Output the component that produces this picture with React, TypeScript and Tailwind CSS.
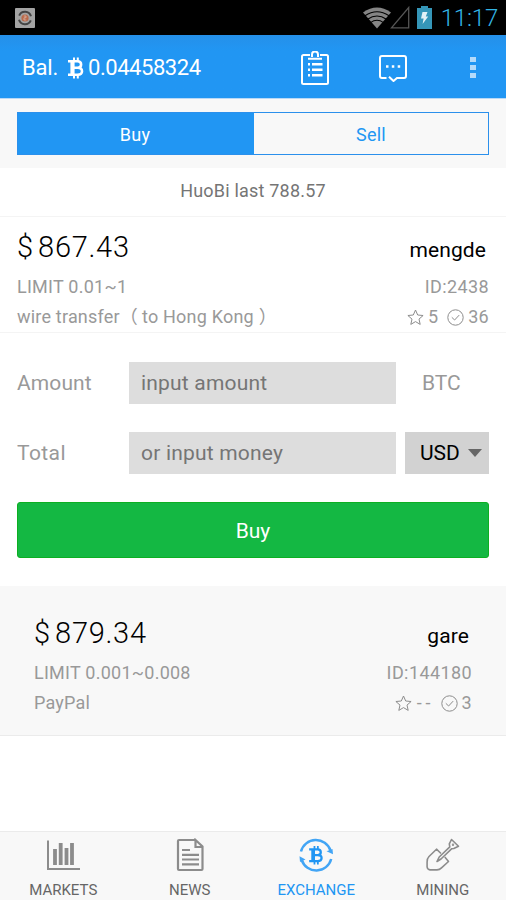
import { useState } from 'react'

const offers = [
  {
    price: '867.43',
    user: 'mengde',
    limit: '0.01~1',
    id: '2438',
    method: ['wire transfer', 'to Hong Kong'],
    stars: '5',
    trades: '36',
  },
  {
    price: '879.34',
    user: 'gare',
    limit: '0.001~0.008',
    id: '144180',
    method: ['PayPal'],
    stars: '--',
    trades: '3',
  },
]

function BitcoinMark(props: React.SVGProps<SVGSVGElement>) {
  return (
    <svg viewBox="0 0 16 22" fill="none" stroke="currentColor" {...props}>
      <path d="M6 .5v4M9.800 .5v4M6 17.500v4M9.800 17.500v4" strokeWidth="2" />
      <path d="M0 4.300h9.500q3.600 0 3.600 3.200T9.500 10.800M0 17.700h9.500q4.500 0 4.500-3.500T9.500 10.800H5" strokeWidth="2.600" />
      <path d="M4.500 4v14" strokeWidth="4.200" />
    </svg>
  )
}

function StatusBar() {
  return (
    <div className="h-[35px] bg-black flex items-center justify-between pl-[15px] pr-[8px]">
      <svg className="w-5 h-5" viewBox="0 0 20 20">
        <rect width="20" height="20" rx="1" fill="#a3a3a3" />
        <circle cx="10" cy="10" r="3.6" fill="#b9694a" />
        <path d="M8.8 8h2.2v1.8H9v2.2h2.3" fill="none" stroke="#d8b5a5" strokeWidth=".8" />
        <path d="M4.2 7.6A6.3 6.3 0 0 1 16 8.2" fill="none" stroke="#444" strokeWidth="2" />
        <path d="M15.8 12.4A6.3 6.3 0 0 1 4 11.8" fill="none" stroke="#444" strokeWidth="2" />
      </svg>
      <div className="flex items-center">
        <svg className="w-[28px] h-[22px]" viewBox="0 0 28 22" fill="none">
          <path d="M0 5.600Q14-4.500 28 5.600L14 21.500Z" fill="#858585" />
          <g stroke="#000" strokeWidth="1.1">
            <path d="M2 8.800Q14 .8 26 8.800" />
            <path d="M4.600 12.200Q14 5.800 23.400 12.200" />
            <path d="M7.500 15.600Q14 11 20.500 15.600" />
          </g>
        </svg>
        <svg className="w-[20px] h-[23px] -ml-px" viewBox="0 0 20 23">
          <path d="M1.500 21.800H18.700V1.5Z" fill="none" stroke="#555" strokeWidth="1.3" />
        </svg>
        <svg className="w-[15px] h-[23px] ml-[7px]" viewBox="0 0 15 23">
          <path d="M4 0h7v2h4v21H0V2h4Z" fill="#3596b8" />
          <path d="M5.5 6h5L8.800 10.500h2.400L5.600 18l1-5.500H4Z" fill="#e3f1f6" />
        </svg>
        <span className="ml-[9px] text-[24px] leading-none text-[#33b5e5] font-light tracking-[-0.2px]">11:17</span>
      </div>
    </div>
  )
}

function Header() {
  return (
    <header className="h-[64px] bg-linear-to-b from-[#2590e9] to-[#2196f3] to-25% border-b border-[#b9d9f7] flex items-center justify-between pl-[22px] pr-[30px] text-white">
      <div className="flex items-center text-[22px] leading-none pt-[2px]">
        <span className="w-[46px] tracking-[-0.2px]">Bal.</span>
        <BitcoinMark className="w-[16px] h-[22px]" />
        <span className="ml-[4px] tracking-[-0.45px]">0.04458324</span>
      </div>
      <div className="flex items-center pt-[2px]">
        <svg className="w-[28px] h-[34px]" viewBox="0 0 28 34" fill="none" stroke="#fff" strokeWidth="2">
          <path d="M9 4H2.5A1.5 1.5 0 0 0 1 5.5v26A1.5 1.5 0 0 0 2.5 33h23a1.5 1.5 0 0 0 1.500-1.500v-26A1.500 1.500 0 0 0 25.500 4H19" />
          <path d="M7 7.700h14M11 6V3.500a3 3 0 0 1 6 0V6" />
          <path d="M7 13.200h2M11 13.200h10.500M7 18.700h2M11 18.700h10.500M7 24.200h2M11 24.200h10.500" strokeWidth="2.400" />
        </svg>
        <svg className="w-[28px] h-[28px] ml-[50px]" viewBox="0 0 28 28" fill="none" stroke="#fff" strokeWidth="2">
          <path d="M7.500 24H3a2 2 0 0 1-2-2V4a2 2 0 0 1 2-2h22a2 2 0 0 1 2 2v18a2 2 0 0 1-2 2h-7l-3.500 3-4.500-4.300" />
          <path d="M7 12.500h2.500M12.800 12.500h2.500M18.700 12.500h2.500" strokeWidth="2.600" />
        </svg>
        <div className="ml-[63px] flex flex-col gap-[3px]">
          <span className="w-[6px] h-[5px] bg-[#b3dafa]" />
          <span className="w-[6px] h-[5px] bg-[#b3dafa]" />
          <span className="w-[6px] h-[5px] bg-[#b3dafa]" />
        </div>
      </div>
    </header>
  )
}

function Offer({ offer, inset }: { offer: (typeof offers)[number]; inset?: boolean }) {
  return (
    <div className={inset ? 'h-[150px] bg-[#f8f8f8] border-b border-[#ebebeb] pt-[17px] px-[34px]' : 'h-[116px] border-b border-[#f4f4f4] px-[17px]'}>
      <div className="h-[55px] pt-[10px] flex justify-between text-black">
        <div className="text-[29px] leading-[40px] font-light">
          $<span className="ml-[5px] tracking-[0.7px]">{offer.price}</span>
        </div>
        <div className="pr-[3px] text-[21px] leading-[46px] tracking-[0.1px]">{offer.user}</div>
      </div>
      <div className="flex justify-between text-[18px] leading-[30px] text-[#999]">
        <span className="tracking-[0.25px]">LIMIT {offer.limit}</span>
        <span className="tracking-[0.4px]">ID:{offer.id}</span>
      </div>
      <div className="flex justify-between text-[18px] leading-[30px] text-[#999]">
        <div className="flex tracking-[0.2px]">
          <span>{offer.method[0]}</span>
          {offer.method[1] && (
            <>
              <span>（</span>
              <span className="ml-[4px]">{offer.method[1]}</span>
              <span className="ml-[5px]">）</span>
            </>
          )}
        </div>
        <div className="flex items-center">
          <svg className="w-[17px] h-[17px]" viewBox="0 0 17 17" fill="none" stroke="#8c8c8c">
            <path d="M8.500 1l2.200 5 5.400.5-4.100 3.600 1.200 5.300-4.700-2.800-4.700 2.800L5 10.100.9 6.500 6.300 6Z" />
          </svg>
          <span className={offer.stars === '--' ? 'ml-[5px] tracking-[4px]' : 'ml-[4px]'}>{offer.stars}</span>
          <svg className={offer.stars === '--' ? 'w-[17px] h-[17px] ml-[6px]' : 'w-[17px] h-[17px] ml-[9px]'} viewBox="0 0 17 17" fill="none" stroke="#8c8c8c">
            <circle cx="8.500" cy="8.500" r="7.700" />
            <path d="M4.800 8.300l2.800 2.700 4.600-4.900" />
          </svg>
          <span className="ml-[4px] tracking-[0.3px]">{offer.trades}</span>
        </div>
      </div>
    </div>
  )
}

function TradeForm() {
  return (
    <div className="px-[17px] pt-[29px] pb-[28px] flex flex-col gap-[28px] text-[21px]">
      <div className="flex items-center h-[42px] text-[#999]">
        <label className="w-[112px] pt-[2px] tracking-[0.1px]">Amount</label>
        <input
          className="w-[267px] h-full px-[12px] bg-[#ddd] tracking-[0.2px] placeholder:text-[#757575] outline-none"
          placeholder="input amount"
        />
        <span className="ml-[26px] pt-[2px]">BTC</span>
      </div>
      <div className="flex items-center h-[42px] text-[#999]">
        <label className="w-[112px] pt-[2px] tracking-[0.4px]">Total</label>
        <input
          className="w-[267px] h-full px-[12px] bg-[#ddd] tracking-[0.2px] placeholder:text-[#757575] outline-none"
          placeholder="or input money"
        />
        <button className="ml-[9px] w-[84px] h-full bg-[#d2d2d2] pl-[15px] pr-[7px] flex items-center justify-between text-black">
          <span className="pt-[2px]">USD</span>
          <svg className="w-[14px] h-[8px]" viewBox="0 0 14 8">
            <path d="M0 0h14L7 8Z" fill="#666" />
          </svg>
        </button>
      </div>
      <button className="h-[56px] rounded-[3px] border border-[#0caf22] bg-[#14b843] pt-[3px] text-white">Buy</button>
    </div>
  )
}

const tabs = [
  {
    label: 'MARKETS',
    icon: (
      <svg className="w-[34px] h-[34px]" viewBox="0 0 34 34" fill="none" stroke="#8c8c8c">
        <path d="M2 2.500v28.500H34" strokeWidth="2" />
        <path d="M9 11v16M14.700 5v22M20.500 10v17M26 5v22" strokeWidth="3.800" />
      </svg>
    ),
  },
  {
    label: 'NEWS',
    icon: (
      <svg className="w-[34px] h-[34px]" viewBox="0 0 34 34" fill="none" stroke="#8c8c8c" strokeWidth="2.200">
        <path d="M22.500 2H6a1 1 0 0 0-1 1v28a1 1 0 0 0 1 1h22.500a1 1 0 0 0 1-1V8.500L22.500 2V9h6.500" />
        <path d="M9 12h8M9 16.800h17M9 21.500h17M9 26.300h17" />
      </svg>
    ),
  },
  {
    label: 'EXCHANGE',
    icon: (
      <svg className="w-[34px] h-[34px]" viewBox="0 0 34 34" fill="none" stroke="#42a5f5" strokeWidth="2.500">
        <path d="M2 13.500A15.400 15.400 0 0 1 31.500 12.500" />
        <path d="M32.200 21A15.400 15.400 0 0 1 2.700 22" />
        <path d="M27.500 13.300l6-2.300.5 5.200ZM6.500 21.500L.5 18.200 1 24Z" fill="#42a5f5" stroke="none" />
        <BitcoinMark x="10" y="7.500" width="14.500" height="19.500" />
      </svg>
    ),
  },
  {
    label: 'MINING',
    icon: (
      <svg className="w-[34px] h-[34px]" viewBox="0 0 34 34" fill="none" stroke="#8c8c8c" strokeWidth="1.600" strokeLinejoin="round">
        <path d="M15 15.500L10.500 11.200 3 18.500Q1 20.500 1.100 24v5q.4 2.600 2.900 2.900h7q2.500-.2 4.500-2.100L22.500 23.500 18.800 19" />
        <path d="M11 23.500l2.200-4.500L23.800 8.800 23.300 5.800 25.500 1.500 32.500 8.300 27.800 10.500 25.800 10.700 15 21Z" />
        <circle cx="27" cy="6.800" r=".4" />
      </svg>
    ),
  },
]

export default function App() {
  const [tab, setTab] = useState('EXCHANGE')

  return (
    <div className="w-[506px] h-[900px] bg-white flex flex-col overflow-hidden font-['Roboto','Noto_Sans_CJK_SC',sans-serif]">
      <StatusBar />
      <Header />

      {/* Buy / Sell switch */}
      <div className="h-[69px] bg-[#f8f8f8] px-[17px] pt-[13px]">
        <div className="h-[43px] flex border border-[#2b90ec] text-[18px] tracking-[0.2px]">
          <button className="w-[236px] bg-[#2196f3] pt-px pr-[2px] text-white">Buy</button>
          <button className="flex-1 pt-px text-[#2196f3]">Sell</button>
        </div>
      </div>

      <div className="h-[49px] border-b border-[#f4f4f4] pb-[4px] flex items-center justify-center text-[18px] tracking-[0.2px] text-[#757575]">
        HuoBi last 788.57
      </div>

      <main className="flex-1">
        <Offer offer={offers[0]} />
        <TradeForm />
        <Offer offer={offers[1]} inset />
      </main>

      <nav className="h-[69px] bg-[#f8f8f8] border-t border-[#ebebeb] grid grid-cols-4">
        {tabs.map((t) => (
          <button
            key={t.label}
            onClick={() => setTab(t.label)}
            className={`flex flex-col items-center pt-[6px] text-[15px] leading-[18px] ${
              tab === t.label ? 'text-[#2196f3]' : 'text-[#666]'
            }`}
          >
            {t.icon}
            <span className="mt-[9px]">{t.label}</span>
          </button>
        ))}
      </nav>
    </div>
  )
}
